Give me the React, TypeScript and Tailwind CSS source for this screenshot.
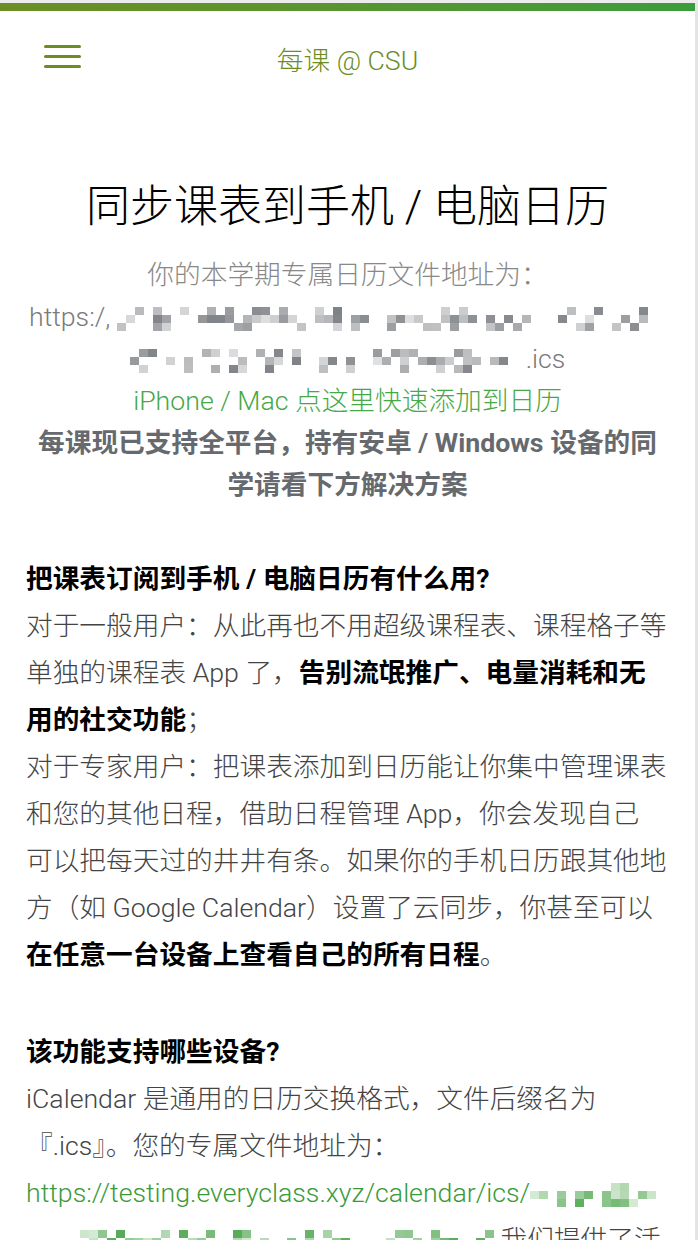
import { ReactNode } from 'react';

// tiny deterministic generator so the pixelated parts look the same every render
function makeRand(seed: number) {
  let s = seed;
  return () => {
    s = (s * 9301 + 49297) % 233280;
    return s / 233280;
  };
}

type MosaicProps = {
  cols: number;
  seed: number;
  rgb: string;
  lead?: number;
};

// pixelated (blurred-out) part of the private calendar address
function Mosaic({ cols, seed, rgb, lead = 0 }: MosaicProps) {
  const rand = makeRand(seed);
  const rows = [0, 1, 2].map((row) =>
    Array.from({ length: cols }).map((_, col) => {
      const p = row === 1 ? 0.5 : 0.25;
      const hit = col >= lead && rand() < p;
      return hit ? 0.2 + rand() * 0.6 : 0;
    })
  );
  return (
    <span className="inline-flex flex-col align-middle">
      {rows.map((cells, i) => (
        <span key={i} className="flex">
          {cells.map((a, j) => (
            <span
              key={j}
              className="block h-[8px] w-[9px]"
              style={{ backgroundColor: a ? `rgba(${rgb}, ${a.toFixed(2)})` : 'transparent' }}
            />
          ))}
        </span>
      ))}
    </span>
  );
}

function Section({ title, children }: { title: string; children: ReactNode }) {
  return (
    <section className="mt-[50px]">
      <h2 className="font-bold text-black">{title}</h2>
      <p className="text-[#444]">{children}</p>
    </section>
  );
}

export default function App() {
  return (
    <div
      className="min-h-screen bg-white border-t-[3px] border-[#ececec] flex text-[26.7px] font-light leading-[47px]"
      style={{ fontFamily: 'Roboto, "Noto Sans CJK SC", sans-serif' }}
    >
      <div className="flex-1 border-r-[3px] border-[#e4e4e4]">
        <div className="h-[8px] bg-linear-to-r from-[#6b8e23] to-[#3b9c3b]" />

        <header className="grid grid-cols-[1fr_auto_1fr] items-start pt-[27px]">
          <button type="button" className="ml-[44px] mt-[7px] flex w-[37px] flex-col gap-[7px]">
            <span className="block h-[3px] w-full rounded-full bg-[#6b8e23]" />
            <span className="block h-[3px] w-full rounded-full bg-[#6b8e23]" />
            <span className="block h-[3px] w-full rounded-full bg-[#6b8e23]" />
          </button>
          <div className="text-[#6b8e23]">每课 @ CSU</div>
          <div />
        </header>

        <main className="px-[26px] pb-10">
          <div className="text-center">
            <h1 className="mt-[94px] text-[44px] leading-[56px] text-black">同步课表到手机&nbsp;/&nbsp;电脑日历</h1>
            <div className="mt-[19px] leading-[42px]">
              <p className="text-[#888]">你的本学期专属日历文件地址为：</p>
              <p className="text-[#7a7a7a]">
                https:/,{' '}
                <Mosaic cols={61} seed={17} rgb="95, 99, 104" />{' '}
                <Mosaic cols={44} seed={53} rgb="95, 99, 104" />
                .ics
              </p>
              <a href="#" className="block text-[#46a846]">
                iPhone / Mac 点这里快速添加到日历
              </a>
              <p className="font-bold text-[#666a6e]">
                每课现已支持全平台，持有安卓 / Windows 设备的同学请看下方解决方案
              </p>
            </div>
          </div>

          <Section title="把课表订阅到手机 / 电脑日历有什么用?">
            对于一般用户：从此再也不用超级课程表、课程格子等单独的课程表 App 了，
            <strong className="font-bold text-black">告别流氓推广、电量消耗和无用的社交功能</strong>；
            <br />
            对于专家用户：把课表添加到日历能让你集中管理课表和您的其他日程，借助日程管理 App，你会发现自己
            <br />
            可以把每天过的井井有条。如果你的手机日历跟其他地
            <br />
            方（如 Google Calendar）设置了云同步，你甚至可以
            <br />
            <strong className="font-bold text-black">在任意一台设备上查看自己的所有日程</strong>。
          </Section>

          <Section title="该功能支持哪些设备?">
            iCalendar 是通用的日历交换格式，文件后缀名为『.ics』。您的专属文件地址为：
            <a href="#" className="text-[#3a9a3a]">
              <span className="whitespace-nowrap">https://testing.everyclass.xyz/calendar/ics/</span>
              <Mosaic cols={14} seed={29} rgb="46, 150, 46" />{' '}
              <Mosaic cols={52} seed={71} rgb="46, 150, 46" lead={6} />
            </a>{' '}
            我们提供了活动日历的订阅方式，在大多数设备上都可以直接使用。
          </Section>
        </main>
      </div>
    </div>
  );
}
